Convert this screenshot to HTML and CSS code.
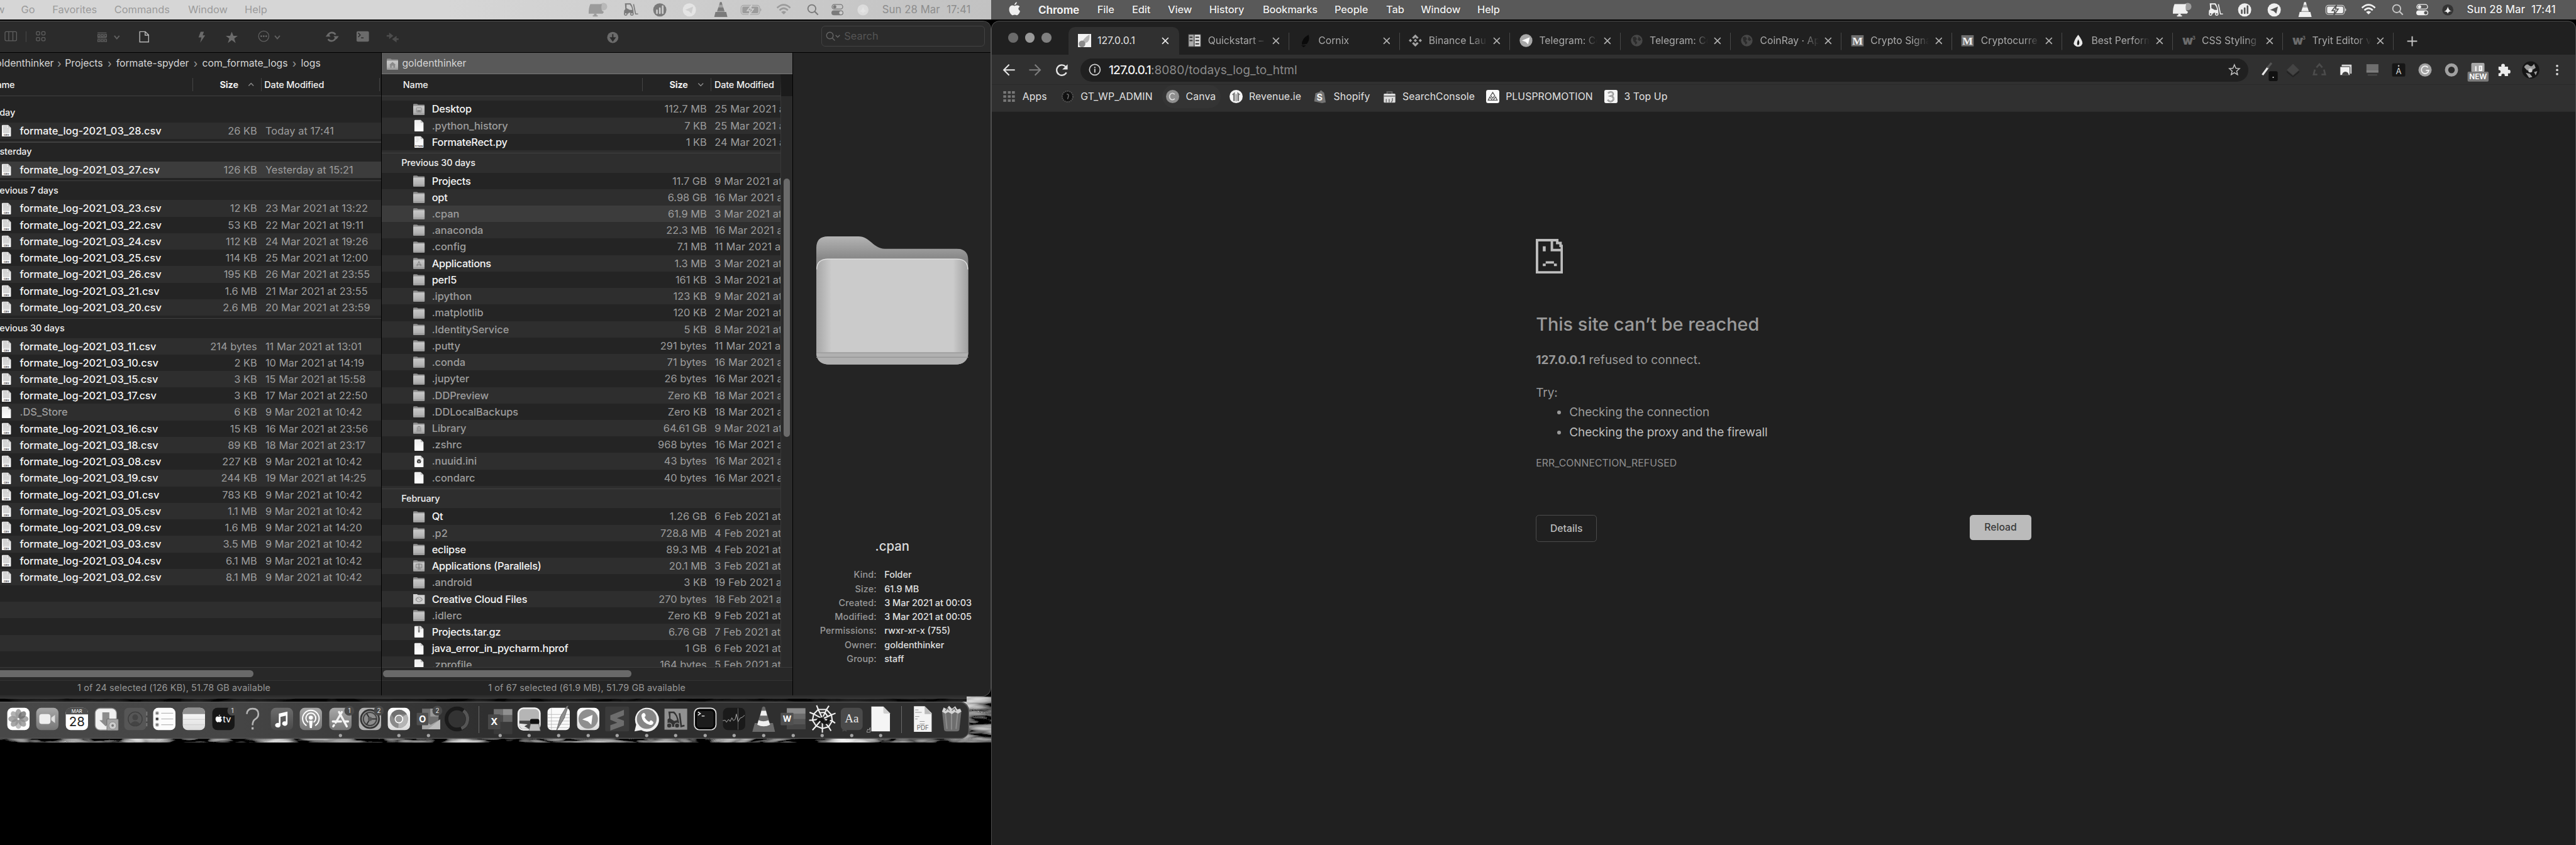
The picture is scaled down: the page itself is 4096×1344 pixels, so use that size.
FILE: index.html
```html
<!DOCTYPE html>
<html lang="en">
<head>
<meta charset="utf-8">
<title>Desktop</title>
<link rel="stylesheet" href="styles.css">
</head>
<body>
<svg class="sprite" aria-hidden="true">
  <defs>
    <linearGradient id="gFolder" x1="0" y1="0" x2="0" y2="1"><stop offset="0" stop-color="#c9c9c9"/><stop offset="1" stop-color="#a9a9a9"/></linearGradient>
    <linearGradient id="gPage" x1="0" y1="0" x2="0" y2="1"><stop offset="0" stop-color="#ececec"/><stop offset="1" stop-color="#fff"/></linearGradient>
    <linearGradient id="gMid" x1="0" y1="0" x2="0" y2="1"><stop offset="0" stop-color="#a8a8a8"/><stop offset="1" stop-color="#767676"/></linearGradient>
    <linearGradient id="gDim" x1="0" y1="0" x2="0" y2="1"><stop offset="0" stop-color="#6c6c6c"/><stop offset="1" stop-color="#4a4a4a"/></linearGradient>
    <linearGradient id="gWhite" x1="0" y1="0" x2="0" y2="1"><stop offset="0" stop-color="#fff"/><stop offset="1" stop-color="#dcdcdc"/></linearGradient>
    <linearGradient id="gBack" x1="0" y1="0" x2="0" y2="1"><stop offset="0" stop-color="#b4b4b4"/><stop offset=".17" stop-color="#888"/><stop offset="1" stop-color="#888"/></linearGradient>
    <linearGradient id="gFront" x1="0" y1="0" x2="1" y2="0"><stop offset="0" stop-color="#a6a6a6"/><stop offset=".1" stop-color="#cbcbcb"/><stop offset=".9" stop-color="#cbcbcb"/><stop offset="1" stop-color="#a0a0a0"/></linearGradient>
  </defs>

  <!-- file list icons -->
  <symbol id="folder" viewBox="0 0 28 30"><path d="M0 4Q0 2 2 2H8Q10 2 12 4H26Q28 4 28 6V28H0z" fill="#8f8f8f"/><rect y="7" width="28" height="21.500" rx="1.500" fill="url(#gFolder)"/><path d="M0 25.500H28" stroke="#8d8d8d"/></symbol>
  <symbol id="f-home" viewBox="0 0 28 30"><use href="#folder"/><path d="M14 10l8 7h-2v7h-4v-5h-4v5H8v-7H6z" fill="#8a8a8a"/></symbol>
  <symbol id="f-desk" viewBox="0 0 28 30"><use href="#folder"/><rect x="8" y="11" width="12" height="11" rx="1.500" fill="none" stroke="#8a8a8a" stroke-width="1.500"/><path d="M10 19h8" stroke="#777" stroke-width="3"/></symbol>
  <symbol id="f-apps" viewBox="0 0 28 30"><use href="#folder"/><path d="M14 10l-5 12M14 10l5 12M8 18.500h12" fill="none" stroke="#858585" stroke-width="1.600"/></symbol>
  <symbol id="f-lib" viewBox="0 0 28 30"><use href="#folder"/><path d="M8 13l6-3 6 3zM8 21h12v2H8zM9 14h2v6H9zm4 0h2v6h-2zm4 0h2v6h-2z" fill="#858585"/></symbol>
  <symbol id="f-par" viewBox="0 0 28 30"><use href="#folder"/><path d="M7 11h14v9H7zM11 23h7M12.500 9v13M15.500 9v13" fill="none" stroke="#808080" stroke-width="1.500"/></symbol>
  <symbol id="f-cc" viewBox="0 0 28 30"><path d="M-1 4Q-1 3 1 3H9L12 5H29V27H-1z" fill="#d0d0d0"/><ellipse cx="14" cy="16" rx="7.500" ry="5.500" fill="none" stroke="#888" stroke-width="1.500"/><path d="M10 18a3 2.500 0 1 1 3-4l4 4a3 2.500 0 1 0 0-4" fill="none" stroke="#888" stroke-width="1.200"/></symbol>
  <symbol id="page" viewBox="0 0 28 30"><path d="M3 3Q3 1 5 1H18L25 8V28Q25 29 24 29H4Q3 29 3 28z" fill="url(#gPage)"/><path d="M18 1V7Q18 8 19 8H25z" fill="#bdbdbd"/></symbol>
  <symbol id="csv" viewBox="0 0 28 30"><use href="#page"/><path d="M6 4h10M6 7h10M6 10h16M6 13h16M6 16h16M6 19h16" stroke="#b9b9b9" stroke-width="1.500"/><path d="M9 3v18M15 3v18" stroke="#d5d5d5"/><text x="14" y="27" font-size="6" font-weight="700" text-anchor="middle" fill="#444">CSV</text></symbol>
  <symbol id="py" viewBox="0 0 28 30"><use href="#page"/><path d="M6 5h5M8 8h7M8 11h5M6 14h6" stroke="#ccc"/><text x="14" y="27" font-size="4.500" font-weight="700" text-anchor="middle" fill="#444">PYTHON</text></symbol>
  <symbol id="ini" viewBox="0 0 28 30"><use href="#page"/><circle cx="14" cy="15" r="5" fill="#333"/><path d="M14 15l-4-2M14 15l4-2M14 15v5" stroke="#ddd" stroke-width="1.200"/></symbol>
  <symbol id="zip" viewBox="0 0 28 30"><use href="#page"/><path d="M12 1h4v13q0 3-2 3t-2-3z" fill="#777"/><path d="M14 2v9" stroke="#ccc" stroke-width="2" stroke-dasharray="1 1"/></symbol>

  <!-- menu bar status icons -->
  <symbol id="s-mon" viewBox="0 0 48 48"><path d="M4 10H32Q28 26 37 29L34 33H0Q0 18 4 10z"/><path d="M13 33h6v4h3v3H10v-3h3z"/><circle cx="36" cy="16" r="9" opacity=".45"/></symbol>
  <symbol id="s-fork" viewBox="0 0 38 48"><path fill-rule="evenodd" d="M4 8H18Q24 16 25 29V33H19A4 4 0 0 0 12 33H2V26L5 22zM8 11V20L16 24H22Q21 16 16 11z"/><circle cx="6" cy="34" r="4.200"/><circle cx="21" cy="34" r="4.200"/><circle cx="6" cy="34" r="1.800" class="cut"/><circle cx="21" cy="34" r="1.800" class="cut"/><path d="M25 10L30 34H36" fill="none" stroke="currentColor" stroke-width="2.500"/></symbol>
  <symbol id="s-chart" viewBox="0 0 34 48"><circle cx="17" cy="24" r="16"/><path d="M10 32V25M17 32V20M24 32V15" class="cutline" stroke-width="4" stroke-linecap="round"/></symbol>
  <symbol id="s-tg" viewBox="0 0 34 48"><circle cx="17" cy="24" r="16"/><path d="M7 24L26 16L22 33L16 27z" class="cut"/></symbol>
  <symbol id="s-cone" viewBox="0 0 34 48"><path d="M15 5h4l2 7h-8zM11 18h12l3 9H8zM4 29H30L33 41H1z"/><path d="M13 12h8l2 6H11zM8 27h18v2H8z" opacity=".5"/></symbol>
  <symbol id="s-bat" viewBox="0 0 54 48"><rect x="2" y="13" width="45" height="22" rx="6" fill="none" stroke="currentColor" stroke-width="2" opacity=".7"/><rect x="5" y="16" width="39" height="16" rx="3"/><path d="M49 20q4 4 0 8z"/><path d="M28 12L17 26h7l-3 11L32 22h-7z" class="cutline thick"/></symbol>
  <symbol id="s-wifi" viewBox="0 0 34 48"><path d="M1 19Q17 4 33 19M7 25Q17 15 27 25" fill="none" stroke="currentColor" stroke-width="4"/><path d="M11 29Q17 24 23 29L17 35z"/></symbol>
  <symbol id="s-mag" viewBox="0 0 34 48"><circle cx="12" cy="21" r="9.500" fill="none" stroke="currentColor" stroke-width="2.800"/><path d="M19 28L27 36" stroke="currentColor" stroke-width="3.200"/></symbol>
  <symbol id="s-cc" viewBox="0 0 34 48"><rect x="1.500" y="11" width="26" height="11" rx="5.500" fill="none" stroke="currentColor" stroke-width="2"/><circle cx="8" cy="16.500" r="4"/><rect x="0" y="25" width="29" height="12" rx="6"/><circle cx="23" cy="31" r="4" class="cut"/></symbol>
  <symbol id="s-siri" viewBox="0 0 34 48"><circle cx="14" cy="24" r="13.500" class="orb"/><path d="M4 28Q12 26 14 16Q16 26 25 28Q16 26 14 33Q12 27 4 28z"/></symbol>
  <symbol id="apple" viewBox="0 0 28 34"><path d="M19.500 0q.5 5-5.500 8Q13.500 3 19.500 0zM14 10q4-2.500 8-1.500 3 .5 4.500 3-7 5 1 11Q25 30 21 32q-2 1-4-.3-2.500-1.200-5 0-2 1-4 .3Q2.500 28.500 1 21 0 13 4.500 9.800 8.500 7 14 10z"/></symbol>

  <!-- browser icons -->
  <symbol id="globe" viewBox="0 0 32 32"><circle cx="16" cy="16" r="14" fill="#474747"/><path d="M6 9q6-5 9 0t-2 7q4 2 4 6l-4 4q-1-6-5-8zM20 6q5 3 7 8l-5 3-4-4 2-3z" fill="#2b2b2b"/></symbol>
  <symbol id="medium" viewBox="0 0 32 32"><rect x="1" y="3" width="30" height="27" fill="#6f6f6f"/><text x="16" y="26" font-size="27" font-weight="700" text-anchor="middle" class="serif" fill="#f2f2f2">M</text></symbol>
  <symbol id="w3" viewBox="0 0 32 32"><text x="13" y="26" font-size="29" font-weight="900" text-anchor="middle" fill="#6c6c6c">w</text><text x="28" y="13" font-size="12" font-weight="700" text-anchor="middle" fill="#6c6c6c">3</text></symbol>
  <symbol id="plane" viewBox="0 0 32 32"><circle cx="16" cy="16" r="15.500" fill="#a8a8a8"/><path d="M6 16L25 8L21 25L15 19z" fill="#fff"/></symbol>
  <symbol id="x" viewBox="0 0 18 18"><path d="M1.500 1.500L16.500 16.500M16.500 1.500L1.500 16.500" fill="none" stroke="currentColor" stroke-width="2.600"/></symbol>
</svg>

<main class="screen">
  <!-- left display -->
  <section class="display files">
    <svg class="wallpaper" viewBox="0 0 2402 112" preserveAspectRatio="none">
      <filter id="swirl" x="0" y="0" width="100%" height="100%"><feTurbulence type="turbulence" baseFrequency=".007 .03" numOctaves="3" seed="8"/><feColorMatrix values="1.500 0 0 0 -.25  1.500 0 0 0 -.25  1.500 0 0 0 -.25  0 0 0 0 1"/></filter>
      <rect width="2402" height="112" filter="url(#swirl)"/>
    </svg>
    <header class="menubar dim">
      <nav><span>w</span><span>Go</span><span>Favorites</span><span>Commands</span><span>Window</span><span>Help</span></nav>
      <div class="status"><svg><use href="#s-mon"/></svg><svg class="dark"><use href="#s-fork"/></svg><svg class="dark"><use href="#s-chart"/></svg><svg class="pale"><use href="#s-tg"/></svg><svg class="dark"><use href="#s-cone"/></svg><svg><use href="#s-bat"/></svg><svg><use href="#s-wifi"/></svg><svg class="dark"><use href="#s-mag"/></svg><svg class="dark"><use href="#s-cc"/></svg><svg class="pale"><use href="#s-siri"/></svg><span>Sun 28 Mar</span><span>17:41</span></div>
    </header>

    <div class="window">
      <div class="toolbar">
        <svg class="tools" viewBox="0 0 1520 74">
          <g fill="none" stroke="#606060" stroke-width="2"><rect x="12" y="25" width="28" height="22" rx="3"/><path d="M21 25v22M31 25v22"/><path d="M63 24v26" stroke="#444"/><rect x="88" y="25" width="8" height="8" rx="2"/><rect x="101" y="25" width="8" height="8" rx="2"/><rect x="88" y="39" width="8" height="8" rx="2"/><rect x="101" y="39" width="8" height="8" rx="2"/><path d="M236 28h22M236 40h22"/><path d="M237 32h5v5h-5zM245 32h5v5h-5zM253 32h5v5h-5zM237 44h5v5h-5zM245 44h5v5h-5zM253 44h5v5h-5z"/><path d="M277 35l6 7 6-7M666 35l6 7 6-7" stroke-width="3"/><circle cx="639" cy="36" r="12.500"/></g>
          <path d="M338.500 25H352l8 8v17h-21.500zM351.500 25v8.500H360" fill="none" stroke="#b5b5b5" stroke-width="2.200"/>
          <g fill="#6b6b6b"><path d="M486 25h8l-3 9h6l-12 18 3-13h-7z"/><path d="M561.500 25l4 10h10.500l-8.500 6.500 3.500 11-9.500-7-9.500 7 3.500-11-8.500-6.500h10.500z"/><circle cx="633" cy="36" r="2"/><circle cx="639" cy="36" r="2"/><circle cx="645" cy="36" r="2"/><rect x="864" y="24" width="30" height="25" rx="3"/><circle cx="1485" cy="39" r="13.500"/></g>
          <path d="M868 28l5 5-5 5M875 40h6" stroke="#2b2b2b" stroke-width="2.200" fill="none"/>
          <path d="M1485 31v11M1480 40l5 7 5-7z" stroke="#2b2b2b" stroke-width="3" fill="#2b2b2b"/>
          <path d="M795 34a10 10 0 0 1 18-2M813 40a10 10 0 0 1-18 3" stroke="#6b6b6b" stroke-width="4" fill="none"/><path d="M789 37h12l-6-8zM808 36h13l-6 8z" fill="#6b6b6b"/>
          <path d="M937 33h6v-6l10 8-10 8v-6h-6zM966 41h-5v-6l-11 8 11 8v-6h5z" fill="#4d4d4d"/>
        </svg>
        <div class="search"><svg viewBox="0 0 40 30"><circle cx="13" cy="13" r="8" /><path d="M19 19l6 6M27 12l5 5 5-5"/></svg>Search</div>
      </div>

      <div class="panes">
        <section class="pane one">
          <div class="path"><span>goldenthinker</span><i>›</i><span>Projects</span><i>›</i><span>formate-spyder</span><i>›</i><span>com_formate_logs</span><i>›</i><span>logs</span></div>
          <div class="head"><span>Name</span><b>Size</b><svg viewBox="0 0 16 10"><path d="M2 8l6-6 6 6"/></svg><span>Date Modified</span></div>
          <div class="list">
            <section><h3>Today</h3>
              <div class="row"><svg><use href="#csv"/></svg><b>formate_log-2021_03_28.csv</b><span>26 KB</span><time>Today at 17:41</time></div></section>
            <section><h3>Yesterday</h3>
              <div class="row on"><svg><use href="#csv"/></svg><b>formate_log-2021_03_27.csv</b><span>126 KB</span><time>Yesterday at 15:21</time></div></section>
            <section><h3>Previous 7 days</h3>
              <div class="row"><svg><use href="#csv"/></svg><b>formate_log-2021_03_23.csv</b><span>12 KB</span><time>23 Mar 2021 at 13:22</time></div>
              <div class="row"><svg><use href="#csv"/></svg><b>formate_log-2021_03_22.csv</b><span>53 KB</span><time>22 Mar 2021 at 19:11</time></div>
              <div class="row"><svg><use href="#csv"/></svg><b>formate_log-2021_03_24.csv</b><span>112 KB</span><time>24 Mar 2021 at 19:26</time></div>
              <div class="row"><svg><use href="#csv"/></svg><b>formate_log-2021_03_25.csv</b><span>114 KB</span><time>25 Mar 2021 at 12:00</time></div>
              <div class="row"><svg><use href="#csv"/></svg><b>formate_log-2021_03_26.csv</b><span>195 KB</span><time>26 Mar 2021 at 23:55</time></div>
              <div class="row"><svg><use href="#csv"/></svg><b>formate_log-2021_03_21.csv</b><span>1.6 MB</span><time>21 Mar 2021 at 23:55</time></div>
              <div class="row"><svg><use href="#csv"/></svg><b>formate_log-2021_03_20.csv</b><span>2.6 MB</span><time>20 Mar 2021 at 23:59</time></div></section>
            <section><h3>Previous 30 days</h3>
              <div class="row"><svg><use href="#csv"/></svg><b>formate_log-2021_03_11.csv</b><span>214 bytes</span><time>11 Mar 2021 at 13:01</time></div>
              <div class="row"><svg><use href="#csv"/></svg><b>formate_log-2021_03_10.csv</b><span>2 KB</span><time>10 Mar 2021 at 14:19</time></div>
              <div class="row"><svg><use href="#csv"/></svg><b>formate_log-2021_03_15.csv</b><span>3 KB</span><time>15 Mar 2021 at 15:58</time></div>
              <div class="row"><svg><use href="#csv"/></svg><b>formate_log-2021_03_17.csv</b><span>3 KB</span><time>17 Mar 2021 at 22:50</time></div>
              <div class="row hid"><svg><use href="#page"/></svg><b>.DS_Store</b><span>6 KB</span><time>9 Mar 2021 at 10:42</time></div>
              <div class="row"><svg><use href="#csv"/></svg><b>formate_log-2021_03_16.csv</b><span>15 KB</span><time>16 Mar 2021 at 23:56</time></div>
              <div class="row"><svg><use href="#csv"/></svg><b>formate_log-2021_03_18.csv</b><span>89 KB</span><time>18 Mar 2021 at 23:17</time></div>
              <div class="row"><svg><use href="#csv"/></svg><b>formate_log-2021_03_08.csv</b><span>227 KB</span><time>9 Mar 2021 at 10:42</time></div>
              <div class="row"><svg><use href="#csv"/></svg><b>formate_log-2021_03_19.csv</b><span>244 KB</span><time>19 Mar 2021 at 14:25</time></div>
              <div class="row"><svg><use href="#csv"/></svg><b>formate_log-2021_03_01.csv</b><span>783 KB</span><time>9 Mar 2021 at 10:42</time></div>
              <div class="row"><svg><use href="#csv"/></svg><b>formate_log-2021_03_05.csv</b><span>1.1 MB</span><time>9 Mar 2021 at 10:42</time></div>
              <div class="row"><svg><use href="#csv"/></svg><b>formate_log-2021_03_09.csv</b><span>1.6 MB</span><time>9 Mar 2021 at 14:20</time></div>
              <div class="row"><svg><use href="#csv"/></svg><b>formate_log-2021_03_03.csv</b><span>3.5 MB</span><time>9 Mar 2021 at 10:42</time></div>
              <div class="row"><svg><use href="#csv"/></svg><b>formate_log-2021_03_04.csv</b><span>6.1 MB</span><time>9 Mar 2021 at 10:42</time></div>
              <div class="row"><svg><use href="#csv"/></svg><b>formate_log-2021_03_02.csv</b><span>8.1 MB</span><time>9 Mar 2021 at 10:42</time></div></section>
            <div class="empty"></div>
          </div>
          <div class="hscroll"><div class="thumb"></div></div>
          <footer>1 of 24 selected (126 KB), 51.78 GB available</footer>
        </section>

        <section class="pane two">
          <div class="path active"><svg><use href="#f-home"/></svg><span>goldenthinker</span></div>
          <div class="body">
            <div class="col">
              <div class="head"><span>Name</span><b>Size</b><svg viewBox="0 0 16 10"><path d="M2 2l6 6 6-6"/></svg><span>Date Modified</span></div>
              <div class="list">
                <section>
                  <div class="row"><svg><use href="#f-desk"/></svg><b>Desktop</b><span>112.7 MB</span><time>25 Mar 2021 at</time></div>
                  <div class="row hid"><svg><use href="#page"/></svg><b>.python_history</b><span>7 KB</span><time>25 Mar 2021 at</time></div>
                  <div class="row"><svg><use href="#py"/></svg><b>FormateRect.py</b><span>1 KB</span><time>24 Mar 2021 at</time></div></section>
                <section><h3>Previous 30 days</h3>
                  <div class="row"><svg><use href="#folder"/></svg><b>Projects</b><span>11.7 GB</span><time>9 Mar 2021 at</time></div>
                  <div class="row"><svg><use href="#folder"/></svg><b>opt</b><span>6.98 GB</span><time>16 Mar 2021 at</time></div>
                  <div class="row hid on"><svg><use href="#folder"/></svg><b>.cpan</b><span>61.9 MB</span><time>3 Mar 2021 at</time></div>
                  <div class="row hid"><svg><use href="#folder"/></svg><b>.anaconda</b><span>22.3 MB</span><time>16 Mar 2021 at</time></div>
                  <div class="row hid"><svg><use href="#folder"/></svg><b>.config</b><span>7.1 MB</span><time>11 Mar 2021 at</time></div>
                  <div class="row"><svg><use href="#f-apps"/></svg><b>Applications</b><span>1.3 MB</span><time>3 Mar 2021 at</time></div>
                  <div class="row"><svg><use href="#folder"/></svg><b>perl5</b><span>161 KB</span><time>3 Mar 2021 at</time></div>
                  <div class="row hid"><svg><use href="#folder"/></svg><b>.ipython</b><span>123 KB</span><time>9 Mar 2021 at</time></div>
                  <div class="row hid"><svg><use href="#folder"/></svg><b>.matplotlib</b><span>120 KB</span><time>2 Mar 2021 at</time></div>
                  <div class="row hid"><svg><use href="#folder"/></svg><b>.IdentityService</b><span>5 KB</span><time>8 Mar 2021 at</time></div>
                  <div class="row hid"><svg><use href="#folder"/></svg><b>.putty</b><span>291 bytes</span><time>11 Mar 2021 at</time></div>
                  <div class="row hid"><svg><use href="#folder"/></svg><b>.conda</b><span>71 bytes</span><time>16 Mar 2021 at</time></div>
                  <div class="row hid"><svg><use href="#folder"/></svg><b>.jupyter</b><span>26 bytes</span><time>16 Mar 2021 at</time></div>
                  <div class="row hid"><svg><use href="#folder"/></svg><b>.DDPreview</b><span>Zero KB</span><time>18 Mar 2021 at</time></div>
                  <div class="row hid"><svg><use href="#folder"/></svg><b>.DDLocalBackups</b><span>Zero KB</span><time>18 Mar 2021 at</time></div>
                  <div class="row hid"><svg><use href="#f-lib"/></svg><b>Library</b><span>64.61 GB</span><time>9 Mar 2021 at</time></div>
                  <div class="row hid"><svg><use href="#page"/></svg><b>.zshrc</b><span>968 bytes</span><time>16 Mar 2021 at</time></div>
                  <div class="row hid"><svg><use href="#ini"/></svg><b>.nuuid.ini</b><span>43 bytes</span><time>16 Mar 2021 at</time></div>
                  <div class="row hid"><svg><use href="#page"/></svg><b>.condarc</b><span>40 bytes</span><time>16 Mar 2021 at</time></div></section>
                <section><h3>February</h3>
                  <div class="row"><svg><use href="#folder"/></svg><b>Qt</b><span>1.26 GB</span><time>6 Feb 2021 at</time></div>
                  <div class="row hid"><svg><use href="#folder"/></svg><b>.p2</b><span>728.8 MB</span><time>4 Feb 2021 at</time></div>
                  <div class="row"><svg><use href="#folder"/></svg><b>eclipse</b><span>89.3 MB</span><time>4 Feb 2021 at</time></div>
                  <div class="row"><svg><use href="#f-par"/></svg><b>Applications (Parallels)</b><span>20.1 MB</span><time>3 Feb 2021 at</time></div>
                  <div class="row hid"><svg><use href="#folder"/></svg><b>.android</b><span>3 KB</span><time>19 Feb 2021 at</time></div>
                  <div class="row"><svg><use href="#f-cc"/></svg><b>Creative Cloud Files</b><span>270 bytes</span><time>18 Feb 2021 at</time></div>
                  <div class="row hid"><svg><use href="#folder"/></svg><b>.idlerc</b><span>Zero KB</span><time>9 Feb 2021 at</time></div>
                  <div class="row"><svg><use href="#zip"/></svg><b>Projects.tar.gz</b><span>6.76 GB</span><time>7 Feb 2021 at</time></div>
                  <div class="row"><svg><use href="#page"/></svg><b>java_error_in_pycharm.hprof</b><span>1 GB</span><time>6 Feb 2021 at</time></div>
                  <div class="row hid"><svg><use href="#page"/></svg><b>.zprofile</b><span>164 bytes</span><time>5 Feb 2021 at</time></div></section>
              </div>
            </div>
            <div class="vscroll"><div class="thumb"></div></div>
          </div>
          <div class="hscroll"><div class="thumb"></div></div>
          <footer>1 of 67 selected (61.9 MB), 51.79 GB available</footer>
        </section>

        <aside class="preview">
          <svg class="big" viewBox="0 0 368 312">
            <path d="M0 28Q0 0 28 0H102C130 0 138 30 166 30H340Q368 30 368 58V280Q368 310 338 310H30Q0 310 0 280z" fill="url(#gBack)"/>
            <rect y="54" width="368" height="256" rx="27" fill="url(#gFront)"/>
            <path d="M1 80Q1 55 28 55H340Q367 55 367 80" fill="none" stroke="#e2e2e2" stroke-width="2"/>
            <path d="M0 281H368V283Q366 310 338 310H30Q2 310 0 283z" fill="#b0b0b0"/><path d="M0 282H368M0 293H368" stroke="#989898" stroke-width="2"/>
          </svg>
          <h2>.cpan</h2>
          <dl><dt>Kind:</dt><dd>Folder</dd><dt>Size:</dt><dd>61.9 MB</dd><dt>Created:</dt><dd>3 Mar 2021 at 00:03</dd><dt>Modified:</dt><dd>3 Mar 2021 at 00:05</dd><dt>Permissions:</dt><dd>rwxr-xr-x (755)</dd><dt>Owner:</dt><dd>goldenthinker</dd><dt>Group:</dt><dd>staff</dd></dl>
        </aside>
      </div>
    </div>
    <div class="under"></div>

    <div class="dock">
      <svg viewBox="0 0 71 90"><rect x="8.500" y="15" width="54" height="54" rx="12" fill="#fff"/><g fill="#8a8a8a" fill-opacity=".75"><ellipse cx="35.500" cy="29" rx="7.500" ry="11"/><ellipse cx="35.500" cy="55" rx="7.500" ry="11" fill="#aaa"/><ellipse cx="22" cy="42" rx="11" ry="7.500"/><ellipse cx="49" cy="42" rx="11" ry="7.500"/><ellipse cx="35.500" cy="29" rx="7.500" ry="11" transform="rotate(45 35.500 42)" fill="#666"/><ellipse cx="35.500" cy="29" rx="7.500" ry="11" transform="rotate(135 35.500 42)"/><ellipse cx="35.500" cy="29" rx="7.500" ry="11" transform="rotate(225 35.500 42)"/><ellipse cx="35.500" cy="29" rx="7.500" ry="11" transform="rotate(315 35.500 42)" fill="#999"/></g></svg>
      <svg viewBox="0 0 71 90"><rect x="8.500" y="15" width="54" height="54" rx="12" fill="url(#gMid)"/><rect x="16" y="30" width="27" height="24" rx="6" fill="#eee"/><path d="M45 39l9-7v20l-9-7z" fill="#ddd"/></svg>
      <svg viewBox="0 0 71 90"><rect x="8.500" y="15" width="54" height="54" rx="12" fill="#fff"/><path d="M8.500 31V27Q8.500 15 20.500 15H50.500Q62.500 15 62.500 27V31z" fill="#4f4f4f"/><text x="35.500" y="28" font-size="11.500" text-anchor="middle" fill="#fff">MAR</text><text x="35.500" y="60" font-size="31" text-anchor="middle" fill="#222">28</text></svg>
      <svg viewBox="0 0 71 90"><rect x="9.500" y="16" width="52" height="53" rx="12" fill="#f0f0f0" stroke="#888" stroke-width="2"/><path d="M27 26H44V45H51L35 60L20 45H27z" fill="#8c8c8c"/><rect x="38" y="42" width="28" height="28" rx="2" fill="#a5a5a5" stroke="#555"/><circle cx="52" cy="58" r="9" fill="#ccc" stroke="#777"/><circle cx="52" cy="58" r="3" fill="#777"/></svg>
      <svg viewBox="0 0 71 90"><rect x="8.500" y="15" width="53" height="54" rx="10" fill="#565656"/><path d="M63 24v10M63 38v10M63 52v8" stroke="#777" stroke-width="3"/><circle cx="35" cy="42" r="17" fill="none" stroke="#3c3c3c" stroke-width="2"/><circle cx="35" cy="38" r="7" fill="#444"/><path d="M23 54q12-13 24 0-12 10-24 0" fill="#444"/></svg>
      <svg viewBox="0 0 71 90"><rect x="8.500" y="15" width="54" height="54" rx="12" fill="#fcfcfc"/><g fill="#777" stroke="#ccc" stroke-width="2"><circle cx="18" cy="28" r="4"/><circle cx="18" cy="42" r="4" fill="#333"/><circle cx="18" cy="56" r="4"/></g><path d="M28 28H57M28 42H57M28 56H57" stroke="#aaa" stroke-width="1.500"/></svg>
      <svg viewBox="0 0 71 90"><rect x="8.500" y="15" width="54" height="54" rx="12" fill="url(#gWhite)"/><path d="M8.500 30V27Q8.500 15 20.500 15H50.500Q62.500 15 62.500 27V30z" fill="#919191"/><path d="M9 43H62M9 56H62" stroke="#ccc" stroke-width="1.500"/></svg>
      <svg viewBox="0 0 71 90"><rect x="8.500" y="15" width="54" height="54" rx="12" fill="#171717"/><use href="#apple" x="14" y="31" width="20" height="20" fill="#fff"/><text x="44" y="50" font-size="22" text-anchor="middle" fill="#fff">tv</text><circle cx="57" cy="22" r="12" class="badge"/><text x="57" y="27.500" class="bt">1</text></svg>
      <svg viewBox="0 0 71 90"><path d="M22 30Q23 17 36 17Q50 17 50 30Q50 38 42 43Q36 47 36 57" fill="none" stroke="#b5b5b5" stroke-width="4"/><rect x="33.500" y="62" width="5" height="5.500" fill="#b5b5b5"/></svg>
      <svg viewBox="0 0 71 90"><rect x="8.500" y="15" width="54" height="54" rx="12" fill="url(#gDim)"/><path d="M28 29l21-5v29a6.500 5.500 0 1 1-4-5V34l-13 3v20a6.500 5.500 0 1 1-4-5z" fill="#fff"/></svg>
      <svg viewBox="0 0 71 90"><rect x="8.500" y="15" width="54" height="54" rx="12" fill="url(#gMid)"/><g fill="none" stroke="#fff" stroke-width="3"><path d="M25 58a20 20 0 1 1 21 0"/><path d="M29 50a12 12 0 1 1 13 0"/></g><circle cx="35.500" cy="39" r="5" fill="#fff"/><path d="M31 46h9l-2 18h-5z" fill="#fff"/></svg>
      <svg viewBox="0 0 71 90"><rect x="8.500" y="15" width="54" height="54" rx="12" fill="url(#gMid)"/><path d="M39 25L24 51M20 57l-2 3M32 25L51 60M17 48H37M44 48H54" fill="none" stroke="#f4f4f4" stroke-width="5" stroke-linecap="round"/><circle cx="57" cy="22" r="12" class="badge"/><text x="57" y="27.500" class="bt">1</text><circle cx="35.500" cy="82" r="4" class="dot"/></svg>
      <svg viewBox="0 0 71 90"><rect x="8.500" y="15" width="54" height="54" rx="12" fill="#b0b0b0"/><circle cx="35.500" cy="42" r="22" fill="#8c8c8c" stroke="#333" stroke-width="4"/><circle cx="35.500" cy="42" r="16" fill="none" stroke="#444" stroke-width="3"/><path d="M35.500 42H52M35.500 42L27 28M35.500 42L27 56" stroke="#333" stroke-width="3"/><circle cx="35.500" cy="42" r="5" fill="#555"/><circle cx="57" cy="22" r="12" class="badge"/><text x="57" y="27.500" class="bt">2</text></svg>
      <svg viewBox="0 0 71 90"><rect x="8.500" y="15" width="54" height="54" rx="12" fill="url(#gWhite)"/><circle cx="35.500" cy="42" r="22" fill="#8a8a8a"/><path d="M35.500 42L54 31A22 22 0 0 1 34 64z" fill="#b5b5b5"/><path d="M35.500 31H55A22 22 0 0 0 17 30L26 46z" fill="#707070"/><circle cx="35.500" cy="42" r="10.500" fill="#fff"/><circle cx="35.500" cy="42" r="8" fill="#999"/><circle cx="35.500" cy="82" r="4" class="dot"/></svg>
      <svg viewBox="0 0 71 90"><path d="M20 17H60V67H20z" fill="#6f6f6f"/><path d="M40 17H60V36H40z" fill="#999"/><path d="M20 44L41 56L64 43V67H20z" fill="#a5a5a5"/><path d="M34 67L64 43V67z" fill="#bbb"/><rect x="7" y="27" width="28" height="30" rx="2" fill="#4f4f4f"/><text x="21" y="50" font-size="22" font-weight="700" text-anchor="middle" fill="#fff">O</text><circle cx="57" cy="22" r="12" class="badge"/><text x="57" y="27.500" class="bt">2</text><circle cx="35.500" cy="82" r="4" class="dot"/></svg>
      <svg viewBox="0 0 71 90"><circle cx="34.500" cy="42" r="25" fill="none" stroke="#1a1a1a" stroke-width="10"/><path d="M50 22A25 25 0 0 1 45 65" fill="none" stroke="#555" stroke-width="8"/><circle cx="34.500" cy="42" r="21" fill="#333"/></svg>
      <i class="sep w32"></i>
      <svg viewBox="0 0 71 90"><rect x="20" y="18" width="45" height="61" rx="2" fill="none"/><rect x="20" y="18" width="45" height="61" rx="2" fill="#3a3a3a"/><path d="M20 18H42V33H20z" fill="#6f6f6f"/><path d="M42 18H65V33H42z" fill="#909090"/><path d="M42 33H65V49H42z" fill="#666"/><path d="M20 33H42V49H20z" fill="#4a4a4a"/><rect x="6" y="31" width="30" height="36" rx="2" fill="#484848"/><text x="21" y="57" font-size="23" font-weight="700" text-anchor="middle" fill="#fff">X</text><circle cx="35.500" cy="82" r="4" class="dot"/></svg>
      <svg viewBox="0 0 71 90"><rect x="9.500" y="16" width="52" height="52" rx="12" fill="#b5b5b5" stroke="#f2f2f2" stroke-width="4"/><path d="M12 46H60V60Q58 66 50 66H22Q12 66 12 56z" fill="#444"/><path d="M12 53l20 2-8 5 10 5-12 1Q12 65 12 56z" fill="#e5e5e5"/><rect x="38" y="42" width="22" height="12" rx="4" fill="#111"/><path d="M39 54H59L63 71H35z" fill="#bdbdbd" stroke="#555"/><circle cx="35.500" cy="82" r="4" class="dot"/></svg>
      <svg viewBox="0 0 71 90"><rect x="8.500" y="15" width="54" height="54" rx="10" fill="#fafafa"/><path d="M9 31H62M9 39H62M9 47H62M9 55H62M9 63H62M18 16V68" stroke="#b5b5b5" stroke-width="1.200"/><path d="M59 10L49 40L30 71L40 36L55 11z" fill="#8d8d8d" stroke="#444"/><circle cx="35.500" cy="82" r="4" class="dot"/></svg>
      <svg viewBox="0 0 71 90"><rect x="8.500" y="15" width="54" height="54" rx="12" fill="url(#gWhite)"/><circle cx="35.500" cy="42" r="23.500" fill="#8f8f8f"/><path d="M21 43L46 32L43 56L35 48z" fill="#fff"/><circle cx="35.500" cy="82" r="4" class="dot"/></svg>
      <svg viewBox="0 0 71 90"><rect x="6.500" y="12" width="58" height="60" rx="4" fill="#3b3b3b"/><path d="M19 33L52 20V33L35 40L52 46V58L19 70V57L36 51L19 44z" fill="#6d6d6d"/><circle cx="35.500" cy="82" r="4" class="dot"/></svg>
      <svg viewBox="0 0 71 90"><path d="M6 72L10 56A29 29 0 1 1 22 69z" fill="#f2f2f2"/><circle cx="35.500" cy="42" r="24" fill="#868686"/><path d="M27 28q4-2 6 5 0 3-3 4 4 9 12 12 2-5 6-3l4 4q-1 8-10 6-17-5-19-20-1-5 4-8z" fill="#fff"/><circle cx="35.500" cy="82" r="4" class="dot"/></svg>
      <svg viewBox="0 0 71 90"><rect x="8.500" y="17" width="55" height="51" fill="#919191"/><path fill-rule="evenodd" d="M18 24H32Q40 30 44 50V61H16V43L20 40zM23 28V41L32 47L39 45Q37 33 30 28z" fill="#333"/><circle cx="20" cy="58" r="6" fill="#333" stroke="#919191" stroke-width="2"/><circle cx="39" cy="58" r="6" fill="#333" stroke="#919191" stroke-width="2"/><path d="M45 28L49 60L57 58" fill="none" stroke="#333" stroke-width="4"/><circle cx="35.500" cy="82" r="4" class="dot"/></svg>
      <svg viewBox="0 0 71 90"><rect x="9.500" y="16" width="52" height="52" rx="12" fill="#1c1c1c" stroke="#d8d8d8" stroke-width="3"/><rect x="13" y="20" width="45" height="45" rx="9" fill="none" stroke="#000" stroke-width="4"/><path d="M18 25l6 4-6 4M27 35h7" fill="none" stroke="#fff" stroke-width="2"/><circle cx="35.500" cy="82" r="4" class="dot"/></svg>
      <svg viewBox="0 0 71 90"><rect x="8.500" y="15" width="54" height="54" rx="12" fill="#1a1a1a"/><path d="M8 46l6-1 3 5 5-7 4 5 4-9 4 7 4-3 3-13 4 19 5-9 5-2 6-5" fill="none" stroke="#aaa" stroke-width="1.500"/><path d="M45 16V68" stroke="#888"/><circle cx="35.500" cy="82" r="4" class="dot"/></svg>
      <svg viewBox="0 0 71 90"><path d="M14 52H58L63 73H8z" fill="#6a6a6a"/><path d="M32 14Q35.500 10 39 14L52 58Q36 68 19 58z" fill="#6a6a6a"/><path d="M30 22H41L44 34H27zM23 45Q35 50 47 45L51 56Q36 64 20 56z" fill="#f0f0f0"/><circle cx="35.500" cy="82" r="4" class="dot"/></svg>
      <svg viewBox="0 0 71 90"><path d="M20 16H65V67H20z" fill="#565656"/><path d="M20 16H65V29H20z" fill="#8a8a8a"/><path d="M20 29H65V42H20z" fill="#6b6b6b"/><path d="M20 55H65V67H20z" fill="#454545"/><rect x="5" y="27" width="31" height="30" rx="2" fill="#505050"/><text x="20.500" y="49" font-size="20" font-weight="700" text-anchor="middle" fill="#fff">W</text><circle cx="35.500" cy="82" r="4" class="dot"/></svg>
      <svg viewBox="0 0 71 90"><g fill="none" stroke="#f2f2f2" stroke-width="3.200"><path d="M26 19H46L58 32L60 47L51 61L36 65L21 59L12 45L15 30z"/><path d="M22 9L26 19L35 38M52 10L46 19L38 36M68 28L58 32L40 40M67 52L60 47L42 43M57 71L51 61L39 47M36 75V48M12 69L21 59L32 46M4 45H12L30 42M5 26L15 30L32 39M29 27L42 26L49 36"/></g><path d="M20 49q4-12 12-10t10 9q5 0 8-9l6 2q-4 14-14 14-8-2-12-9-4 4-10 3z" fill="#161616"/><circle cx="35.500" cy="82" r="4" class="dot"/></svg>
      <svg viewBox="0 0 71 90"><rect x="9" y="15" width="53" height="54" rx="10" fill="#4a4a4a"/><path d="M13 68v5l5-3 5 3v-5" fill="#4a4a4a"/><text x="35.500" y="51" font-size="29" text-anchor="middle" class="serif" fill="#e8e8e8">Aa</text><circle cx="35.500" cy="82" r="4" class="dot"/></svg>
      <svg viewBox="0 0 71 90"><path d="M13 12H42L58 28V72H13z" fill="#f5f5f5"/><path d="M42 12V26Q42 29 45 29H58z" fill="#cfcfcf"/><path d="M2 74l2-7 3 2 3-6V74z" fill="#222" stroke="#ddd"/><circle cx="35.500" cy="82" r="4" class="dot"/></svg>
      <i class="sep w30"></i>
      <svg viewBox="0 0 71 90"><path d="M14 11H40L57 28V73H14z" fill="#f3f3f3"/><path d="M40 11V30H57z" fill="#bbb"/><path d="M17 20h8M17 26h16M17 36h10M17 42h6M28 48h12M28 54h12" stroke="#999" stroke-width="1.500"/><text x="35.500" y="68" font-size="15" text-anchor="middle" fill="#666">PDF</text></svg>
      <svg viewBox="0 0 71 90"><path d="M12 22H59L54 68Q53 72 48 72H23Q18 72 17 68z" fill="#6e6e6e"/><path d="M20 26L24 66M35 26V68M50 26L46 66" stroke="#8c8c8c" stroke-width="3"/><path d="M12 24l4-10 7 4 6-8 7 7 8-6 5 8 7-2 3 7-8 5-8-4-7 5-9-5-7 4z" fill="#d5d5d5"/><path d="M20 22l6-6 4 6M36 22l6-6 4 7" stroke="#666" fill="none" stroke-width="2"/></svg>
    </div>
    <div class="edge"></div>
    <div class="off"></div>
  </section>

  <!-- right display -->
  <section class="display chrome">
    <header class="menubar lit">
      <svg class="apple"><use href="#apple"/></svg>
      <nav><b>Chrome</b><span>File</span><span>Edit</span><span>View</span><span>History</span><span>Bookmarks</span><span>People</span><span>Tab</span><span>Window</span><span>Help</span></nav>
      <div class="status"><svg><use href="#s-mon"/></svg><svg><use href="#s-fork"/></svg><svg><use href="#s-chart"/></svg><svg><use href="#s-tg"/></svg><svg><use href="#s-cone"/></svg><svg><use href="#s-bat"/></svg><svg><use href="#s-wifi"/></svg><svg class="soft"><use href="#s-mag"/></svg><svg><use href="#s-cc"/></svg><svg><use href="#s-siri"/></svg><span>Sun 28 Mar</span><span>17:41</span></div>
    </header>
    <div class="browser">
      <div class="tabs">
        <div class="lights"><i></i><i></i><i></i></div>
        <div class="tab active"><svg viewBox="0 0 32 32"><rect width="32" height="32" fill="#f3f3f3"/><path d="M8 26Q10 12 28 1Q30 20 18 22z" fill="#b5b5b5"/><circle cx="10" cy="24" r="8" fill="#8a8a8a"/></svg><span>127.0.0.1</span><svg class="x"><use href="#x"/></svg></div>
        <div class="tab"><svg viewBox="0 0 32 32"><rect width="32" height="32" rx="2" fill="#3c3c3c"/><rect x="2" y="2" width="12" height="28" fill="#ababab"/><rect x="16" y="2" width="14" height="28" fill="#e0e0e0"/><path d="M4 8h7M4 16h7M18 8h9M18 16h9M18 24h9" stroke="#333" stroke-width="3"/></svg><span>Quickstart –</span><svg class="x"><use href="#x"/></svg></div>
        <div class="tab"><svg viewBox="0 0 32 32"><path d="M8 26Q6 12 24 2Q28 14 20 24zM6 28l12 0-6 4z" fill="#0a0a0a"/></svg><span>Cornix</span><svg class="x"><use href="#x"/></svg></div>
        <div class="tab"><svg viewBox="0 0 32 32"><path d="M16 1l8 8-4 3-4-4-4 4-4-3zM16 31l8-8-4-3-4 4-4-4-4 3zM16 12l4 4-4 4-4-4zM4 12l4 4-4 4-4-4zM28 12l4 4-4 4-4-4z" fill="#a3a3a3"/></svg><span>Binance Lau</span><svg class="x"><use href="#x"/></svg></div>
        <div class="tab"><svg><use href="#plane"/></svg><span>Telegram: Co</span><svg class="x"><use href="#x"/></svg></div>
        <div class="tab"><svg><use href="#globe"/></svg><span>Telegram: Co</span><svg class="x"><use href="#x"/></svg></div>
        <div class="tab"><svg><use href="#globe"/></svg><span>CoinRay · Ap</span><svg class="x"><use href="#x"/></svg></div>
        <div class="tab"><svg><use href="#medium"/></svg><span>Crypto Signa</span><svg class="x"><use href="#x"/></svg></div>
        <div class="tab"><svg><use href="#medium"/></svg><span>Cryptocurre</span><svg class="x"><use href="#x"/></svg></div>
        <div class="tab"><svg viewBox="0 0 32 32"><path d="M16 2Q28 18 26 24Q23 31 16 31T5 24Q6 14 16 2z" fill="#e8e8e8"/><path d="M16 13Q22 24 15 28Q11 24 16 13z" fill="#1a1a1a"/></svg><span>Best Perform</span><svg class="x"><use href="#x"/></svg></div>
        <div class="tab"><svg><use href="#w3"/></svg><span>CSS Styling</span><svg class="x"><use href="#x"/></svg></div>
        <div class="tab"><svg><use href="#w3"/></svg><span>Tryit Editor v</span><svg class="x"><use href="#x"/></svg></div>
        <svg class="plus" viewBox="0 0 26 26"><path d="M13 1V25M1 13H25" stroke="#c4c4c4" stroke-width="3"/></svg>
      </div>
      <div class="address">
        <svg class="nav" viewBox="0 0 216 72"><g fill="none" stroke-width="3.200"><path d="M44 24L31 37L44 50M31 37H58" stroke="#e6e6e6"/><path d="M107 24L120 37L107 50M120 37H93" stroke="#7d7d7d"/><path d="M182 29A12.500 12.500 0 1 0 184 43" stroke="#e6e6e6" stroke-width="3.600"/></g><path d="M187 23V36H174z" fill="#e6e6e6"/></svg>
        <div class="url">
          <svg viewBox="0 0 30 30"><circle cx="15" cy="15" r="13" fill="none" stroke="#d0d0d0" stroke-width="2.600"/><path d="M15 13V22M15 8V11" stroke="#d0d0d0" stroke-width="3"/></svg>
          <p><b>127.0.0.1</b>:8080/todays_log_to_html</p>
          <svg viewBox="0 0 30 30"><path d="M15 3l3.500 8.500 9 .7-7 6 2.200 8.800-7.700-4.800-7.700 4.800 2.200-8.800-7-6 9-.7z" fill="none" stroke="#c4c4c4" stroke-width="2.200"/></svg>
        </div>
        <div class="ext">
          <svg viewBox="0 0 64 72"><path d="M22 49L36 30" stroke="#e8e8e8" stroke-width="5"/><path d="M34 32L44 20" stroke="#555" stroke-width="5"/><rect x="37" y="40" width="22" height="24" rx="4" fill="#111"/><circle cx="48" cy="55" r="1.500" fill="#eee"/></svg>
          <svg viewBox="0 0 64 72"><path d="M32 22l15 15-15 13-15-13z" fill="#444"/><path d="M17 39l15 13 15-13v4L32 55 17 43z" fill="#222"/></svg>
          <svg viewBox="0 0 64 72"><path d="M25 31l7-8 7 8M21 36l-3 12h9M43 36l3 12h-9" fill="none" stroke="#4c4c4c" stroke-width="4"/></svg>
          <svg viewBox="0 0 64 72"><rect x="22" y="24" width="24" height="22" rx="1" fill="#d8d8d8"/><rect x="18" y="29" width="24" height="21" rx="1" fill="#f2f2f2" stroke="#303030" stroke-width="1.500"/><path d="M23 49a8 8 0 0 1 16 0z" fill="#444"/></svg>
          <svg viewBox="0 0 64 72"><rect x="18" y="23" width="29" height="21" fill="#6e6e6e"/><path d="M18 40h29" stroke="#888" stroke-width="2"/><path d="M21 49h23" stroke="#4d4d4d" stroke-width="3"/></svg>
          <svg viewBox="0 0 64 72"><rect x="16" y="21" width="32" height="32" rx="4" fill="#161616"/><text x="32" y="48" font-size="20" text-anchor="middle" fill="#ddd">A</text><circle cx="32" cy="27" r="2" fill="#bbb"/></svg>
          <svg viewBox="0 0 64 72"><circle cx="32" cy="37" r="16" fill="#a2a2a2"/><path d="M39 31a9 9 0 1 0 2 7h-7" fill="none" stroke="#f3f3f3" stroke-width="2.600"/></svg>
          <svg viewBox="0 0 64 72"><circle cx="32" cy="37" r="12" fill="#2a2a2a" stroke="#a0a0a0" stroke-width="8"/></svg>
          <svg viewBox="0 0 64 72"><rect x="16" y="20" width="32" height="22" rx="3" fill="#a8a8a8"/><path d="M27 28v12M36 28h5v10h-5z" stroke="#fff" stroke-width="3" fill="none"/><rect x="7" y="41" width="51" height="24" rx="3" fill="#7b7b7b"/><text x="32.500" y="60" font-size="18" font-weight="600" text-anchor="middle" fill="#fff">NEW</text></svg>
          <svg viewBox="0 0 64 72"><path d="M18 29h7q-2-7 4-7t4 7h8v8q6-2 6 4t-6 4v7h-8q1-6-4-6t-4 6h-7v-7q5 0 5-4t-5-4z" fill="#ececec"/></svg>
          <svg viewBox="0 0 64 72"><circle cx="32" cy="37" r="21" fill="#151515"/><path d="M16 30q6-10 12-4t12-4l4 10-10 6-4-5-6 6zM20 44l10 2 6 8-8 2zM40 42l8-2-4 10z" fill="#9c9c9c"/><circle cx="31" cy="38" r="5" fill="#ccc"/></svg>
          <svg viewBox="0 0 64 72"><g fill="#ddd"><circle cx="32" cy="27" r="2.800"/><circle cx="32" cy="37" r="2.800"/><circle cx="32" cy="47" r="2.800"/></g></svg>
        </div>
      </div>
      <div class="bookmarks">
        <div><svg viewBox="0 0 32 32"><path d="M2 3h7v6H2zM13 3h7v6h-7zM23 3h7v6h-7zM2 13h7v6H2zM13 13h7v6h-7zM23 13h7v6h-7zM2 23h7v6H2zM13 23h7v6h-7zM23 23h7v6h-7z" fill="#777"/></svg><span>Apps</span></div>
        <div><svg viewBox="0 0 32 32"><circle cx="16" cy="16" r="13" fill="#111" stroke="#555" stroke-width="3" stroke-dasharray="3 2"/><path d="M14 10q6 0 4 6l-2 6" fill="none" stroke="#777" stroke-width="2"/></svg><span>GT_WP_ADMIN</span></div>
        <div class="hov"><svg viewBox="0 0 32 32"><circle cx="16" cy="16" r="16" fill="#8f8f8f"/><path d="M21 11a7 8 0 1 0 0 10" fill="none" stroke="#ddd" stroke-width="2.600"/></svg><span>Canva</span></div>
        <div><svg viewBox="0 0 32 32"><circle cx="16" cy="16" r="16" fill="#f5f5f5"/><path d="M9 27V13l-3-2 7-6v22zM23 27V13l3-2-7-6v22zM15 10h2v18h-2z" fill="#777"/></svg><span>Revenue.ie</span></div>
        <div><svg viewBox="0 0 32 32"><path d="M4 8l10-3q3-7 7-1l4 3 4 23-9 2L1 28z" fill="#747474"/><text x="14" y="26" font-size="22" font-weight="700" text-anchor="middle" fill="#f2f2f2">S</text></svg><span>Shopify</span></div>
        <div><svg viewBox="0 0 32 32"><path d="M10 10V5h12v5" fill="none" stroke="#666" stroke-width="3"/><rect x="2" y="9" width="28" height="22" rx="2" fill="#dedede"/><path d="M2 15h28M8 22v8M15 22v8M23 20v6l-3 4" stroke="#777" stroke-width="2.500" fill="none"/></svg><span>SearchConsole</span></div>
        <div><svg viewBox="0 0 32 32"><rect width="32" height="32" rx="5" fill="#fafafa"/><path d="M16 6l5 8-5 6-5-6zM5 25h10l-6-8zM27 25H17l6-8z" fill="none" stroke="#555" stroke-width="2"/></svg><span>PLUSPROMOTION</span></div>
        <div><svg viewBox="0 0 32 32"><rect width="32" height="32" rx="4" fill="#f5f5f5"/><path d="M9 8q7-6 12 0 2 5-5 7 8 2 6 9-7 9-14 0" fill="none" stroke="#8a8a8a" stroke-width="4"/><path d="M9 8q7-6 12 0 2 5-5 7 8 2 6 9-7 9-14 0" fill="none" stroke="#ddd" stroke-width="1"/></svg><span>3 Top Up</span></div>
      </div>
      <div class="content">
        <div class="error">
          <svg class="sad" viewBox="0 0 66 84"><path d="M3 3H52V10H60V17H63V81H3z" fill="none" stroke="#bdbdbd" stroke-width="6"/><path d="M39 3V27H63" fill="none" stroke="#bdbdbd" stroke-width="6"/><path d="M17 18h7v12h-7zM24 54h20v6H24zM17 60h7v6h-7zM44 60h7v6h-7z" fill="#bdbdbd"/></svg>
          <h1>This site can’t be reached</h1>
          <p class="why"><b>127.0.0.1</b> refused to connect.</p>
          <p class="try">Try:</p>
          <ul><li>Checking the connection</li><li><a>Checking the proxy and the firewall</a></li></ul>
          <p class="code">ERR_CONNECTION_REFUSED</p>
          <div class="buttons"><button>Details</button><button class="primary">Reload</button></div>
        </div>
      </div>
    </div>
  </section>
</main>
</body>
</html>
```
FILE: styles.css
```css
* { box-sizing: border-box; margin: 0; padding: 0; }
body { background: #000; font-family: Inter, "Liberation Sans", sans-serif; overflow: hidden; }
i { font-style: normal; }
.sprite { position: absolute; width: 0; height: 0; }
.serif { font-family: "Liberation Serif", serif; }

.screen { zoom: 0.65622; display: flex; width: 6242px; height: 2048px; overflow: hidden; }
.display { display: flex; flex-direction: column; height: 2048px; }
.files { position: relative; width: 2402px; flex: none; background: #000; }
.files > * { position: relative; flex: none; }
.files > .wallpaper { position: absolute; left: 0; top: 1688px; width: 2402px; height: 112px; }
.chrome { width: 3840px; flex: none; background: #000; }

/* menu bars */
.menubar { display: flex; height: 48px; line-height: 48px; font-size: 25px; white-space: nowrap; flex: none; }
.menubar nav { display: grid; height: 48px; }
.dim { background: linear-gradient(90deg, #d6d6d6 0 45%, #c2c2c2); color: #9b9b9b; --cut: #cecece; --orb: #dcdcdc; }
.dim nav { grid-template-columns: 60px 76px 150px 179px 137px 833px; margin-left: -9px; }
.lit { background: #595959; color: #f0f0f0; --cut: #555; --orb: #333; text-shadow: 0 2px 3px rgba(0,0,0,.3); font-weight: 500; }
.lit nav { grid-template-columns: 143px 84px 87px 100px 130px 174px 125px 84px 137px 1686px; letter-spacing: -.2px; }
.lit nav b { font-weight: 700; font-size: 26px; }
.apple { width: 28px; height: 34px; margin: 5px 43px 0 43px; fill: #f0f0f0; }
.status { display: grid; grid-template-columns: 84px 72px 72px 75px 65px 88px 73px 60px 62px 61px 156px auto; font-size: 25.500px; letter-spacing: .1px; }
.status svg { height: 48px; width: 34px; fill: currentColor; overflow: visible; }
.status svg:nth-child(1) { width: 48px; }
.status svg:nth-child(2) { width: 38px; }
.status svg:nth-child(6) { width: 54px; }
.dim .dark { color: #7a7a7a; }
.dim .status span { color: #8d8d8d; }
.dim .pale { color: #e4e4e4; }
.soft { color: #c9c9c9; }
.cut { fill: var(--cut); }
.orb { fill: var(--orb); }
.cutline { fill: none; stroke: var(--cut); }
.thick { fill: currentColor; stroke-width: 2.500px; }
.dim .pale .orb { fill: #999; }

/* file manager window */
.window { height: 1638px; margin-top: 2px; background: #242424; border: solid #505050; border-width: 2px 2px 2px 0; border-radius: 0 20px 22px 0; overflow: hidden; }
.toolbar { display: flex; height: 76px; background: #2b2b2b; border-bottom: 2px solid #000; }
.tools { width: 1520px; height: 74px; flex: none; }
.search { display: flex; align-items: center; width: 397px; height: 50px; margin: 11px 0 0 470px; padding-left: 6px; border: 2px solid #434343; border-radius: 9px; color: #555; font-size: 25px; }
.search svg { width: 40px; height: 30px; margin-right: 8px; fill: none; stroke: #666; stroke-width: 2.200px; }
.panes { display: flex; height: 1558px; }
.pane { display: flex; flex-direction: column; flex: none; }
.one { width: 923px; }
.two { width: 998px; border-left: 3px solid #000; border-right: 3px solid #000; }
.preview { flex: 1; }

.path { display: flex; align-items: center; height: 52px; flex: none; font-size: 24px; color: #d5d5d5; white-space: nowrap; }
.one .path { margin-left: -25px; }
.path i { width: 32px; text-align: center; color: #9a9a9a; font-size: 26px; line-height: 24px; }
.path i:nth-of-type(1) { width: 27px; }
.active.path { background: #595959; border-bottom: 1px solid #787878; }
.path svg { width: 28px; height: 30px; margin: 4px 10px 0 12px; }

.head { display: grid; align-items: center; height: 54px; flex: none; border-bottom: 2px solid #404040; font-size: 22px; font-weight: 500; letter-spacing: -.2px; color: #f2f2f2; white-space: nowrap; }
.head > * { height: 32px; line-height: 32px; }
.head svg { width: 16px; height: 32px; fill: none; stroke: #8e8e8e; stroke-width: 2px; }
.head b { font-weight: 700; border-left: 2px solid #444; }
.head span:last-child { border-left: 2px solid #444; }
.one .head { grid-template-columns: 491px 134px 32px 288px; margin-left: -25px; }
.one .head b { padding-left: 65px; }
.one .head span:last-child { padding-left: 7px; border-right: 2px solid #444; }
.two .head { grid-template-columns: 579px 135px 32px 1fr; padding-left: 52px; }
.two .head b { padding-left: 65px; }
.two .head span:last-child { padding-left: 7px; }

.list { flex: 1; min-height: 0; overflow: hidden; }
.one .list { padding-top: 10px; height: 1384px; flex: none; }
.list h3 { height: 54px; padding-top: 7px; font-size: 22px; line-height: 47px; font-weight: 500; letter-spacing: -.1px; color: #f0f0f0; position: relative; }
.list h3::before { content: ""; position: absolute; left: 0; right: 0; top: 6px; height: 2px; background: #404040; }
.one section:first-child h3::before { display: none; }
.row { display: grid; align-items: center; height: 40px; font-size: 25px; line-height: 40px; white-space: nowrap; color: #9d9d9d; }
.row svg { width: 28px; height: 30px; overflow: visible; }
.row b { font-weight: 500; color: #f4f4f4; letter-spacing: -.4px; }
.row.hid b { color: #9d9d9d; letter-spacing: -.1px; }
.row span { text-align: right; }
.row time { letter-spacing: .1px; overflow: hidden; }
.one .row { grid-template-columns: 46px 375px 200px 282px; padding-left: 2px; column-gap: 0; }
.one .row time { padding-left: 20px; }
.one .row b { letter-spacing: -.06px; }
.one .list h3 { text-indent: -23px; }
.one section:nth-child(2) h3 { text-indent: -27px; }
.one section:nth-child(1) h3 { text-indent: -27px; }
.one .row:nth-of-type(odd) { background: #2e2e2e; }
.one .row.on, .two .row.on { background: #3c3c3c; }
.empty { height: 200px; background: repeating-linear-gradient(#242424 0 40px, #2e2e2e 40px 80px); }

.body { display: flex; height: 1438px; flex: none; }
.col { display: flex; flex-direction: column; width: 966px; overflow: hidden; flex: none; }
.two .list { padding-top: 11px; background: #2e2e2e; }
.two .list h3 { padding-left: 48px; }
.two .row { grid-template-columns: 46px 419px 247px 178px; padding-left: 76px; }
.two .row:nth-of-type(odd) { background: #242424; }
.two .row.on { background: #3c3c3c; }
.two .row time { padding-left: 19px; letter-spacing: .2px; }
.vscroll { flex: 1; background: #2a2a2a; border-left: 2px solid #383838; border-top: 54px solid #1b1b1b; padding: 200px 0 0 6px; }
.vscroll .thumb { width: 16px; height: 626px; border-radius: 8px; background: #6b6b6b; }
.hscroll { height: 31px; flex: none; background: #282828; border-top: 2px solid #3a3a3a; padding-top: 6px; }
.hscroll .thumb { height: 16px; border-radius: 8px; background: #696969; }
.one .hscroll .thumb { width: 634px; margin-left: -20px; }
.two .hscroll .thumb { width: 602px; margin-left: 4px; }
footer { flex: 1; border-top: 2px solid #333; text-align: center; font-size: 22px; line-height: 34px; letter-spacing: .2px; color: #969696; background: #242424; }
.one footer { padding-right: 80px; }

.preview { display: flex; flex-direction: column; padding: 445px 0 0 57px; }
.big { width: 368px; height: 312px; overflow: visible; }
.preview h2 { width: 368px; margin-top: 418px; text-align: center; font-size: 31px; line-height: 44px; font-weight: 500; color: #dcdcdc; }
.preview dl { display: grid; grid-template-columns: 146px 1fr; column-gap: 19px; margin-top: 30px; font-size: 22px; line-height: 34px; font-weight: 500; color: #e0e0e0; white-space: nowrap; }
.preview dt { text-align: right; color: #999; letter-spacing: .2px; }

/* dock */
.under { height: 12px; background: linear-gradient(#000 0 2px, #454545 2px 4px, rgba(0,0,0,.85) 4px); margin-right: 60px; }
.dock { display: flex; width: 2349px; height: 90px; padding-left: 8.500px; background: linear-gradient(90deg, #484848, #454545 25%, #2f2f2f 50%, #2f2f2f); box-shadow: inset -2px 2px #585858, inset 0 -2px #585858; border-radius: 0 22px 22px 0; }
.dock svg { width: 71px; height: 90px; flex: none; }
.sep { flex: none; background: linear-gradient(#6a6a6a, #6a6a6a) center 12px / 2px 66px no-repeat; }
.w32 { width: 32px; }
.w30 { width: 30px; }
.badge { fill: #484848; }
.bt { font-size: 15px; text-anchor: middle; fill: #e0e0e0; }
.dot { fill: #a5a5a5; }
.edge { height: 10px; }
.off { height: 248px; background: #000; }

/* browser */
.browser { flex: 1; margin-top: 2px; display: flex; flex-direction: column; background: #202020; border: solid #4d4d4d; border-width: 2px 2px 0 2px; border-radius: 20px 20px 0 0; overflow: hidden; }
.tabs { display: flex; height: 81px; padding-top: 14px; flex: none; }
.lights { display: flex; gap: 16px; width: 185.800px; padding: 14px 0 0 40px; flex: none; }
.lights i { width: 24px; height: 24px; border-radius: 50%; background: #6a6a6a; }
.lights i:nth-child(2) { background: #999; }
.lights i:nth-child(3) { background: #808080; }
.tab { display: flex; align-items: center; width: 267.600px; height: 67px; flex: none; padding-left: 22px; font-size: 24px; color: #a9a9a9; background: linear-gradient(#484848, #484848) right 14px / 2px 42px no-repeat; white-space: nowrap; }
.tab svg { width: 32px; height: 32px; flex: none; margin-right: 16px; }
.tab span { width: 142px; overflow: hidden; -webkit-mask: linear-gradient(90deg, #000 105px, transparent 142px); mask: linear-gradient(90deg, #000 105px, transparent 142px); }
.tab .x { width: 18px; height: 18px; margin: 0 0 0 14px; color: #b4b4b4; }
.tab.active { background: #303030; border-radius: 16px 16px 0 0; color: #e6e6e6; box-shadow: 0 20px #303030; }
.tab.active span { -webkit-mask: none; mask: none; }
.tab.active .x { color: #eee; }
.plus { width: 26px; height: 26px; margin: 21px 0 0 32px; }
.address { display: flex; height: 73px; background: #303030; border-bottom: 2px solid #292929; flex: none; }
.nav { width: 214px; height: 72px; flex: none; margin-left: -2px; }
.url { display: flex; align-items: center; width: 2831px; height: 56px; margin: 9px 12px 0 2px; border-radius: 28px; background: #202020; flex: none; padding-left: 21px; }
.url svg { width: 30px; height: 30px; flex: none; }
.url p { width: 2713px; margin-left: 18px; font-size: 29px; letter-spacing: .1px; color: #8a8a8a; }
.url b { font-weight: 500; letter-spacing: -1.200px; color: #f0f0f0; }
.ext { display: flex; }
.ext svg { width: 64px; height: 72px; }
.bookmarks { display: grid; grid-template-columns: 141px 255px 153px 205px 167px 250px 287px 200px; padding-left: 26px; height: 66px; flex: none; background: #303030; border-bottom: 2px solid #2a2a2a; }
.bookmarks div { display: flex; align-items: center; height: 56px; font-size: 24px; color: #e2e2e2; white-space: nowrap; letter-spacing: .2px; }
.bookmarks svg { width: 32px; height: 32px; margin-right: 16px; }
.bookmarks .hov { width: 142px; margin-left: -10px; padding-left: 10px; border-radius: 28px; background: #343434; }

.content { flex: 1; background: #202020; }
.error { width: 1200px; margin: 308px 0 0 1318px; color: #9a9a9a; font-size: 29px; letter-spacing: -.1px; }
.sad { display: block; width: 66px; height: 84px; }
.error h1 { margin-top: 95px; font-size: 44px; line-height: 56px; font-weight: 500; letter-spacing: 0; }
.error p { line-height: 48px; margin-top: 35px; }
.error p.why { letter-spacing: .2px; }
.error p.try { margin-top: 30px; }
.error ul { padding-left: 81px; line-height: 48.500px; }
.error a { color: #bdbdbd; }
.error p.code { font-size: 24px; margin-top: 26px; letter-spacing: .15px; color: #909090; }
.buttons { display: flex; justify-content: space-between; align-items: flex-start; margin-top: 101px; }
.buttons button { width: 148px; height: 66px; font: 500 24px Inter, sans-serif; color: #bcbcbc; background: none; border: 2px solid #4c4c4c; border-radius: 8px; }
.buttons .primary { height: 62px; background: #bbb; border: 0; color: #3a3a3a; }
```
